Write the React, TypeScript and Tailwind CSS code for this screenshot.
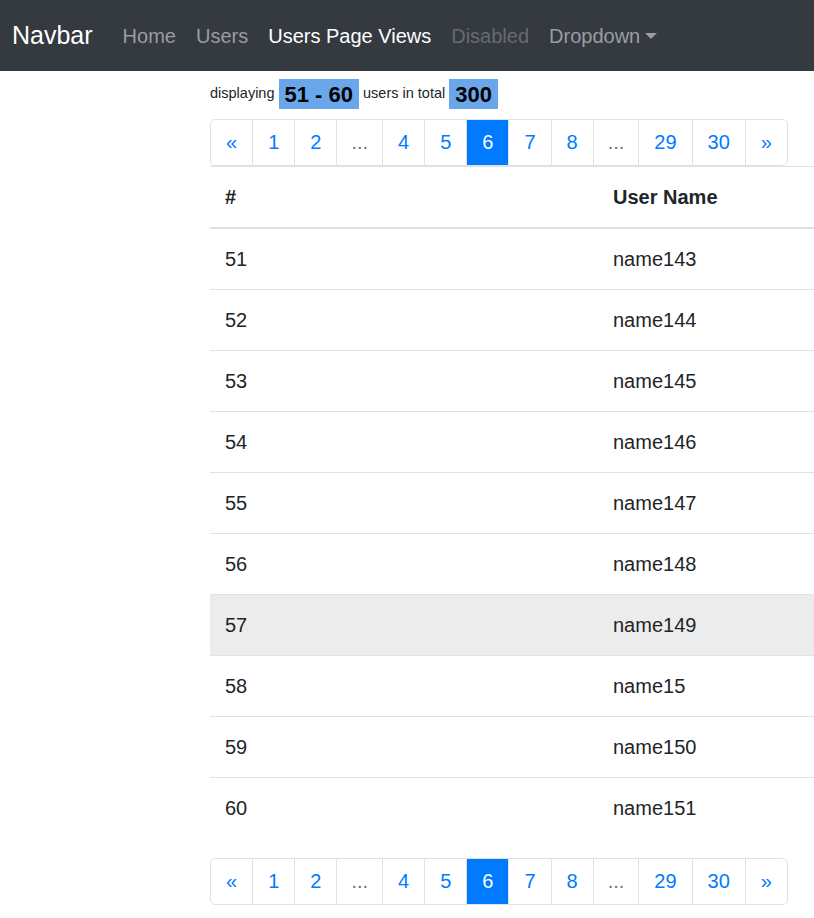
import { Fragment } from 'react'

const rows = [
  [51, 'name143'],
  [52, 'name144'],
  [53, 'name145'],
  [54, 'name146'],
  [55, 'name147'],
  [56, 'name148'],
  [57, 'name149'],
  [58, 'name15'],
  [59, 'name150'],
  [60, 'name151'],
] as const

const pages = ['«', '1', '2', '...', '4', '5', '6', '7', '8', '...', '29', '30', '»']

function Pagination() {
  return (
    <ul className="flex w-fit">
      {pages.map((p, i) => {
        const active = p === '6'
        const muted = p === '...'
        return (
          <li
            key={i}
            className={
              'h-[47px] border border-[#dee2e6] flex items-center leading-[25px] ' +
              (muted ? 'px-[14px] ' : 'px-[15px] ') +
              (i === 0 ? 'rounded-l-[5px] ' : '-ml-px ') +
              (i === pages.length - 1 ? 'rounded-r-[5px] ' : '') +
              (active
                ? 'bg-[#007bff] border-[#007bff] text-white relative'
                : muted
                  ? 'text-[#6c757d]'
                  : 'text-[#007bff]')
            }
          >
            {p}
          </li>
        )
      })}
    </ul>
  )
}

export default function App() {
  return (
    <div className="min-h-[918px] w-[814px] overflow-hidden bg-white text-[20px] text-[#212529] font-['Liberation_Sans',Arial,sans-serif]">
      <nav className="h-[71px] bg-[#343a40] flex items-center pl-[12px]">
        <span className="text-[25px] text-white mr-[20px]">Navbar</span>
        <a className="px-[10px] text-[#9a9da0]">Home</a>
        <a className="px-[10px] text-[#9a9da0]">Users</a>
        <a className="px-[10px] text-white">Users Page Views</a>
        <a className="px-[10px] text-[#676b6f]">Disabled</a>
        <a className="px-[10px] text-[#9a9da0] flex items-center">
          Dropdown
          <span className="ml-[5px] mt-[1px] w-0 h-0 border-x-[6px] border-x-transparent border-t-[6px] border-t-[#9a9da0]" />
        </a>
      </nav>

      <div className="ml-[210px] w-[778px]">
        <div className="h-[46px] mb-[2px] flex items-center text-[14.5px] text-[#212529]">
          <span>displaying&nbsp;</span>
          <span className="bg-[#6aa6ea] px-[6px] h-[30px] flex items-center text-[22px] font-bold text-black">51 - 60</span>
          <span>&nbsp;users in total&nbsp;</span>
          <span className="bg-[#6aa6ea] px-[6px] h-[30px] flex items-center text-[22px] font-bold text-black">300</span>
        </div>

        <Pagination />

        <table className="w-full mb-[20px] border-collapse leading-[30px]">
          <thead>
            <tr>
              <th className="w-[388px] text-left font-bold p-[15px] border-t border-t-[#dee2e6] border-b-2 border-b-[#dee2e6]">#</th>
              <th className="text-left font-bold p-[15px] border-t border-t-[#dee2e6] border-b-2 border-b-[#dee2e6]">User Name</th>
            </tr>
          </thead>
          <tbody>
            {rows.map(([id, name]) => (
              <Fragment key={id}>
                <tr className={id === 57 ? 'bg-[#ececec]' : ''}>
                  <td className="p-[15px] border-t border-[#dee2e6]">{id}</td>
                  <td className="p-[15px] border-t border-[#dee2e6]">{name}</td>
                </tr>
              </Fragment>
            ))}
          </tbody>
        </table>

        <Pagination />
      </div>
    </div>
  )
}
